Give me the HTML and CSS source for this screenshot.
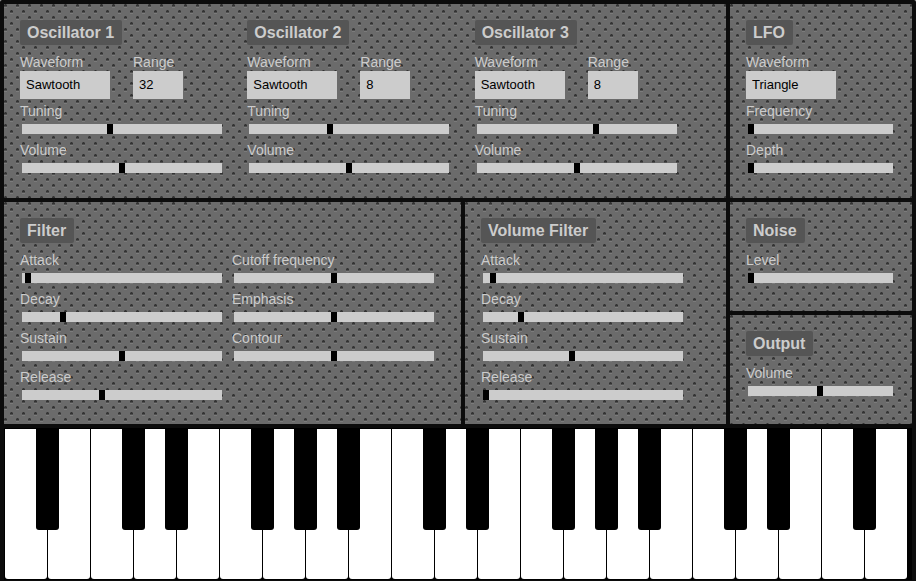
FILE: index.html
```
<!DOCTYPE html>
<html lang="en">
<head>
<meta charset="utf-8">
<title>Synthesizer</title>
<link rel="stylesheet" href="styles.css">
</head>
<body>
<main class="synth">
  <div class="panels">
    <section class="panel oscillators">
      <div class="oscillator">
        <h2>Oscillator 1</h2>
        <div class="selects">
          <div class="field"><label for="o1-wave">Waveform</label><select id="o1-wave"><option>Sawtooth</option></select></div>
          <div class="field"><label for="o1-range">Range</label><select id="o1-range" class="narrow"><option>32</option></select></div>
        </div>
        <div class="control"><label for="o1-tune">Tuning</label><input id="o1-tune" type="range" step="any" value="43.8"></div>
        <div class="control"><label for="o1-vol">Volume</label><input id="o1-vol" type="range" step="any" value="50"></div>
      </div>
      <div class="oscillator">
        <h2>Oscillator 2</h2>
        <div class="selects">
          <div class="field"><label for="o2-wave">Waveform</label><select id="o2-wave"><option>Sawtooth</option></select></div>
          <div class="field"><label for="o2-range">Range</label><select id="o2-range" class="narrow"><option>8</option></select></div>
        </div>
        <div class="control"><label for="o2-tune">Tuning</label><input id="o2-tune" type="range" step="any" value="40.2"></div>
        <div class="control"><label for="o2-vol">Volume</label><input id="o2-vol" type="range" step="any" value="50"></div>
      </div>
      <div class="oscillator">
        <h2>Oscillator 3</h2>
        <div class="selects">
          <div class="field"><label for="o3-wave">Waveform</label><select id="o3-wave"><option>Sawtooth</option></select></div>
          <div class="field"><label for="o3-range">Range</label><select id="o3-range" class="narrow"><option>8</option></select></div>
        </div>
        <div class="control"><label for="o3-tune">Tuning</label><input id="o3-tune" type="range" step="any" value="59.8"></div>
        <div class="control"><label for="o3-vol">Volume</label><input id="o3-vol" type="range" step="any" value="50"></div>
      </div>
    </section>

    <section class="panel lfo side">
      <h2>LFO</h2>
      <div class="selects">
        <div class="field"><label for="lfo-wave">Waveform</label><select id="lfo-wave"><option>Triangle</option></select></div>
      </div>
      <div class="control"><label for="lfo-freq">Frequency</label><input id="lfo-freq" type="range" step="any" value="0"></div>
      <div class="control"><label for="lfo-depth">Depth</label><input id="lfo-depth" type="range" step="any" value="0"></div>
    </section>

    <section class="panel filter">
      <h2>Filter</h2>
      <div class="columns">
        <div>
          <div class="control"><label for="f-attack">Attack</label><input id="f-attack" type="range" step="any" value="1.5"></div>
          <div class="control"><label for="f-decay">Decay</label><input id="f-decay" type="range" step="any" value="19.6"></div>
          <div class="control"><label for="f-sustain">Sustain</label><input id="f-sustain" type="range" step="any" value="50"></div>
          <div class="control"><label for="f-release">Release</label><input id="f-release" type="range" step="any" value="39.7"></div>
        </div>
        <div>
          <div class="control"><label for="f-cutoff">Cutoff frequency</label><input id="f-cutoff" type="range" step="any" value="50"></div>
          <div class="control"><label for="f-emphasis">Emphasis</label><input id="f-emphasis" type="range" step="any" value="50"></div>
          <div class="control"><label for="f-contour">Contour</label><input id="f-contour" type="range" step="any" value="50"></div>
        </div>
      </div>
    </section>

    <section class="panel volume-filter">
      <h2>Volume Filter</h2>
      <div class="control"><label for="v-attack">Attack</label><input id="v-attack" type="range" step="any" value="3.6"></div>
      <div class="control"><label for="v-decay">Decay</label><input id="v-decay" type="range" step="any" value="18"></div>
      <div class="control"><label for="v-sustain">Sustain</label><input id="v-sustain" type="range" step="any" value="44.3"></div>
      <div class="control"><label for="v-release">Release</label><input id="v-release" type="range" step="any" value="0"></div>
    </section>

    <section class="panel noise side">
      <h2>Noise</h2>
      <div class="control"><label for="noise-level">Level</label><input id="noise-level" type="range" step="any" value="0"></div>
    </section>

    <section class="panel output side">
      <h2>Output</h2>
      <div class="control"><label for="out-vol">Volume</label><input id="out-vol" type="range" step="any" value="49.6"></div>
    </section>
  </div>

  <div class="keyboard">
    <div class="slot"><button class="white" aria-label="F2"></button><button class="black" aria-label="F sharp 2"></button></div>
    <div class="slot"><button class="white" aria-label="G2"></button></div>
    <div class="slot"><button class="white" aria-label="C3"></button><button class="black" aria-label="C sharp 3"></button></div>
    <div class="slot"><button class="white" aria-label="D3"></button><button class="black" aria-label="D sharp 3"></button></div>
    <div class="slot"><button class="white" aria-label="E3"></button></div>
    <div class="slot"><button class="white" aria-label="F3"></button><button class="black" aria-label="F sharp 3"></button></div>
    <div class="slot"><button class="white" aria-label="G3"></button><button class="black" aria-label="G sharp 3"></button></div>
    <div class="slot"><button class="white" aria-label="A3"></button><button class="black" aria-label="A sharp 3"></button></div>
    <div class="slot"><button class="white" aria-label="B3"></button></div>
    <div class="slot"><button class="white" aria-label="C4"></button><button class="black" aria-label="C sharp 4"></button></div>
    <div class="slot"><button class="white" aria-label="D4"></button><button class="black" aria-label="D sharp 4"></button></div>
    <div class="slot"><button class="white" aria-label="E4"></button></div>
    <div class="slot"><button class="white" aria-label="F4"></button><button class="black" aria-label="F sharp 4"></button></div>
    <div class="slot"><button class="white" aria-label="G4"></button><button class="black" aria-label="G sharp 4"></button></div>
    <div class="slot"><button class="white" aria-label="A4"></button><button class="black" aria-label="A sharp 4"></button></div>
    <div class="slot"><button class="white" aria-label="B4"></button></div>
    <div class="slot"><button class="white" aria-label="C5"></button><button class="black" aria-label="C sharp 5"></button></div>
    <div class="slot"><button class="white" aria-label="D5"></button><button class="black" aria-label="D sharp 5"></button></div>
    <div class="slot"><button class="white" aria-label="E5"></button></div>
    <div class="slot"><button class="white" aria-label="F5"></button><button class="black" aria-label="F sharp 5"></button></div>
    <div class="slot"><button class="white" aria-label="G5"></button></div>
  </div>
</main>
</body>
</html>
```
FILE: styles.css
```
* {
  box-sizing: border-box;
}

body {
  margin: 0;
  background: #ccc;
  font-family: "Liberation Sans", Arial, sans-serif;
  font-size: 14px;
  line-height: 16px;
  color: #ccc;
}

.synth {
  min-height: 100vh;
  padding: 4px 4px 1px;
  background: #0c0c0c;
  border-radius: 2px 2px 0 0;
}

.panels {
  display: grid;
  grid-template-columns: 1fr 261px 182px;
  grid-template-areas:
    "osc osc lfo"
    "filter volume noise"
    "filter volume output";
  gap: 4px;
}

.panel {
  padding: 16px;
  background-color: #6b6b6b;
  /* Perforated metal: two staggered holes per tile, each with a lit lower rim */
  background-image: url("data:image/svg+xml,%3Csvg xmlns='http://www.w3.org/2000/svg' width='12' height='12' shape-rendering='crispEdges'%3E%3Cpath fill='%23505050' d='M0 0h3v3H0zM6 6h3v3H6z'/%3E%3Cpath fill='%23333' d='M1 0h1v2H1zM0 1h3v1H0zM7 6h1v2H7zM6 7h3v1H6z'/%3E%3Cpath fill='%237c7c7c' d='M0 3h3v1H0zM6 9h3v1H6z'/%3E%3C/svg%3E");
  background-size: 12px 12px;
}

.oscillators {
  grid-area: osc;
  display: grid;
  grid-template-columns: repeat(3, 1fr);
  padding: 16px 24px 17px 16px;
}

.lfo { grid-area: lfo; }
.filter { grid-area: filter; }
.volume-filter { grid-area: volume; }
.noise { grid-area: noise; }
.output { grid-area: output; }

h2 {
  width: fit-content;
  margin: 0 0 9px;
  padding: 0 8px 0 7px;
  background: #555;
  border-radius: 2px;
  font-size: 16px;
  line-height: 25px;
}

label {
  display: block;
}

.selects {
  display: flex;
  gap: 23px;
  margin-bottom: 4px;
}

select {
  display: block;
  appearance: none;
  width: 90px;
  height: 28px;
  margin: 1px 0 0;
  padding: 0 6px 1px;
  border: 0;
  border-radius: 0;
  background: #ccc;
  color: #000;
  font: 13px "Liberation Sans", Arial, sans-serif;
}

.narrow {
  width: 50px;
}

.columns {
  display: flex;
  gap: 8px;
}

.control {
  width: 204px;
  padding: 0 2px 8px;
}

.side .control {
  width: 149px;
}

.control label {
  margin: 0 -2px 5px;
}

input[type="range"] {
  display: block;
  appearance: none;
  width: 100%;
  height: 10px;
  margin: 0;
  background: #ccc;
}

input[type="range"]::-webkit-slider-thumb {
  appearance: none;
  width: 6px;
  height: 10px;
  background: #000;
}

.keyboard {
  display: flex;
  margin-top: 4px;
  padding: 1px;
  background: #000;
}

.slot {
  position: relative;
  width: 43px;
  padding-right: 1px;
}

.white {
  display: block;
  width: 100%;
  height: 150px;
  padding: 0;
  border: 0;
  border-radius: 0 0 3px 3px;
  background: #fff;
}

.black {
  position: absolute;
  z-index: 1;
  top: 0;
  right: -11px;
  width: 23px;
  height: 101px;
  padding: 0;
  border: 0;
  border-radius: 0 0 3px 3px;
  background: #000;
}
```
